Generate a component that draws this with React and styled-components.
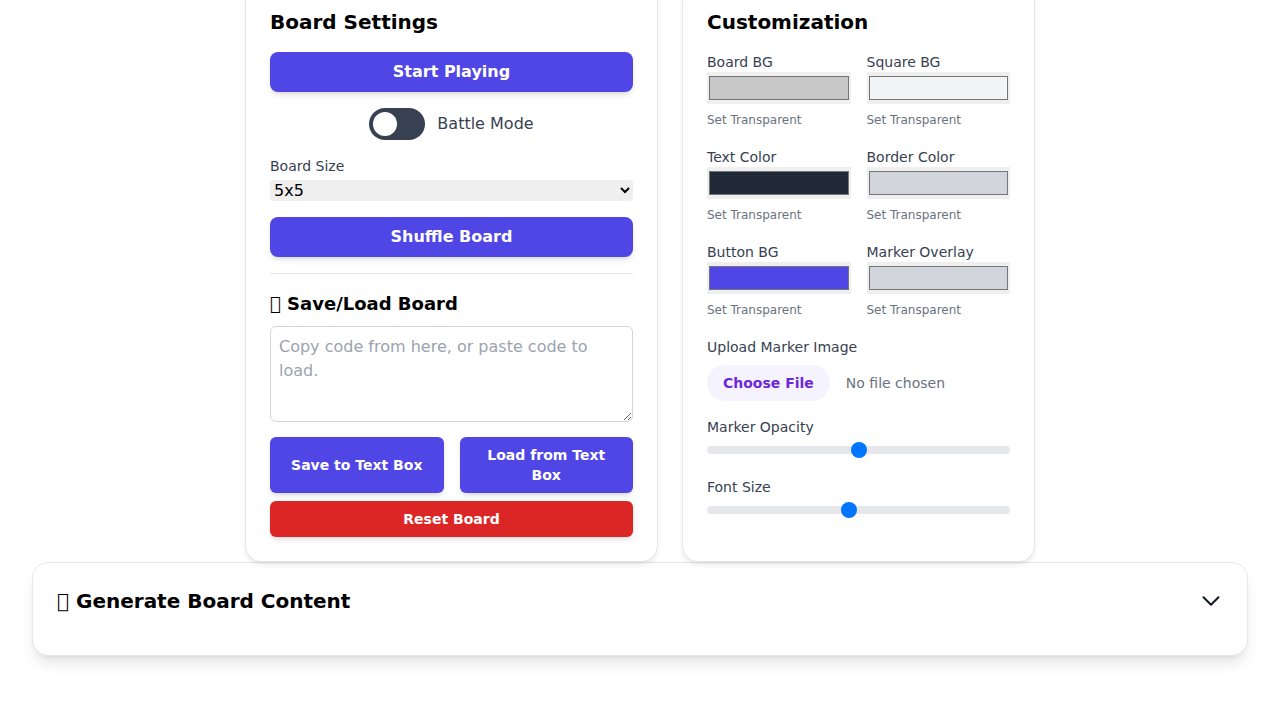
import React from "react"
import styled, { createGlobalStyle } from "styled-components"

const GlobalStyle = createGlobalStyle`
  * {
    box-sizing: border-box;
  }
  html,
  body {
    margin: 0;
    padding: 0;
    background: #ffffff;
    font-family: "DejaVu Sans", "Noto Sans", sans-serif;
    color: #111827;
    overflow: hidden;
  }
`

// the emoji in the original had no glyph, so it shows as an empty box
const MISSING = "\u{E000}"

const swatches = [
  { label: "Board BG", color: "#c8c8c8" },
  { label: "Square BG", color: "#f3f4f6" },
  { label: "Text Color", color: "#1f2937" },
  { label: "Border Color", color: "#d1d5db" },
  { label: "Button BG", color: "#4f46e5" },
  { label: "Marker Overlay", color: "#d1d5db" },
]

const ChevronDown = () => (
  <svg
    width="24"
    height="24"
    viewBox="0 0 24 24"
    fill="none"
    stroke="#111827"
    strokeWidth="2"
    strokeLinecap="round"
    strokeLinejoin="round"
  >
    <path d="M4.5 8.25 12 15.75 19.5 8.25" />
  </svg>
)

const App = () => {
  return (
    <Page>
      <GlobalStyle />
      <Columns>
        <Card>
          <Heading>Board Settings</Heading>
          <PrimaryButton>Start Playing</PrimaryButton>
          <ToggleRow>
            <Track>
              <Knob />
            </Track>
            <ToggleText>Battle Mode</ToggleText>
          </ToggleRow>
          <Field>
            <Label>Board Size</Label>
            <Select defaultValue="5x5">
              <option>3x3</option>
              <option>4x4</option>
              <option>5x5</option>
              <option>6x6</option>
            </Select>
          </Field>
          <PrimaryButton>Shuffle Board</PrimaryButton>
          <Divider />
          <SubHeading>{MISSING} Save/Load Board</SubHeading>
          <CodeBox placeholder="Copy code from here, or paste code to load." />
          <ButtonPair>
            <SmallButton>Save to Text Box</SmallButton>
            <SmallButton>Load from Text Box</SmallButton>
          </ButtonPair>
          <SmallButton $danger>Reset Board</SmallButton>
        </Card>

        <Card>
          <Heading>Customization</Heading>
          <ColorGrid>
            {swatches.map((s) => (
              <ColorField key={s.label}>
                <Label>{s.label}</Label>
                <ColorWell>
                  <Swatch $color={s.color} />
                </ColorWell>
                <TransparentLink>Set Transparent</TransparentLink>
              </ColorField>
            ))}
          </ColorGrid>
          <Field>
            <Label>Upload Marker Image</Label>
            <FileInput type="file" />
          </Field>
          <Field>
            <Label>Marker Opacity</Label>
            <Range type="range" min="0" max="1" step="0.05" defaultValue="0.5" />
          </Field>
          <Field>
            <Label>Font Size</Label>
            <Range type="range" min="10" max="40" defaultValue="24" />
          </Field>
        </Card>
      </Columns>

      <Collapsible>
        <CollapsibleHeader>
          <CollapsibleTitle>{MISSING} Generate Board Content</CollapsibleTitle>
          <ChevronDown />
        </CollapsibleHeader>
      </Collapsible>
    </Page>
  )
}

const Page = styled.div`
  margin-top: -17px;
  padding: 0 32px 40px 32px;
`

const Columns = styled.div`
  display: grid;
  grid-template-columns: 413px 353px;
  gap: 24px;
  justify-content: center;
  align-items: stretch;
`

const Card = styled.section`
  display: flex;
  flex-direction: column;
  background: #ffffff;
  border: 1px solid #e5e7eb;
  border-radius: 16px;
  padding: 24px;
  box-shadow: 0 4px 6px -1px rgba(0, 0, 0, 0.08), 0 2px 4px -2px rgba(0, 0, 0, 0.06);
`

const Heading = styled.h2`
  margin: 0 0 16px 0;
  font-size: 20px;
  line-height: 28px;
  font-weight: 700;
  color: #000;
`

const SubHeading = styled.h3`
  margin: 0 0 8px 0;
  font-size: 18px;
  line-height: 28px;
  font-weight: 700;
  color: #000;
`

const PrimaryButton = styled.button`
  height: 40px;
  width: 100%;
  border: none;
  border-radius: 8px;
  background: #4f46e5;
  color: #fff;
  font-family: inherit;
  font-size: 16px;
  line-height: 22px;
  padding: 0 0 1px 0;
  font-weight: 700;
  box-shadow: 0 4px 6px -1px rgba(0, 0, 0, 0.1), 0 2px 4px -2px rgba(0, 0, 0, 0.1);
  margin-bottom: 16px;
`

const ToggleRow = styled.div`
  display: flex;
  align-items: center;
  justify-content: center;
  gap: 12px;
  margin-bottom: 16px;
`

const Track = styled.div`
  width: 56px;
  height: 32px;
  border-radius: 16px;
  background: #374151;
  padding: 4px;
  display: flex;
  align-items: center;
`

const Knob = styled.div`
  width: 24px;
  height: 24px;
  border-radius: 50%;
  background: #fff;
`

const ToggleText = styled.span`
  font-size: 16px;
  line-height: 24px;
  padding-bottom: 1px;
  color: #374151;
`

const Field = styled.div`
  display: flex;
  flex-direction: column;
  margin-bottom: 16px;
`

const Label = styled.label`
  font-size: 14px;
  line-height: 20px;
  color: #374151;
`

const Select = styled.select`
  margin-top: 4px;
  width: 100%;
  height: 21px;
  border: none;
  border-radius: 4px;
  background: #efefef;
  font-family: inherit;
  font-size: 16px;
  color: #000;
  padding: 0;
`

const Divider = styled.hr`
  border: none;
  border-top: 1px solid #e5e7eb;
  margin: 0 0 16px 0;
`

const CodeBox = styled.textarea`
  height: 96px;
  width: 100%;
  border: 1px solid #d1d5db;
  border-radius: 6px;
  padding: 8px;
  font-family: inherit;
  font-size: 16px;
  line-height: 24px;
  resize: vertical;
  margin-bottom: 15px;
  &::placeholder {
    color: #9ca3af;
  }
`

const ButtonPair = styled.div`
  display: grid;
  grid-template-columns: 1fr 1fr;
  gap: 16px;
  margin-bottom: 8px;
`

const SmallButton = styled.button`
  min-height: ${(p) => (p.$danger ? "36px" : "56px")};
  width: 100%;
  border: none;
  border-radius: 6px;
  padding: 8px 16px;
  background: ${(p) => (p.$danger ? "#dc2626" : "#4f46e5")};
  color: #fff;
  font-family: inherit;
  font-size: 14px;
  line-height: 20px;
  font-weight: 700;
  box-shadow: 0 4px 6px -1px rgba(0, 0, 0, 0.1), 0 2px 4px -2px rgba(0, 0, 0, 0.1);
`

const ColorGrid = styled.div`
  display: grid;
  grid-template-columns: 1fr 1fr;
  column-gap: 16px;
  row-gap: 16px;
  margin-bottom: 16px;
`

const ColorField = styled.div`
  display: flex;
  flex-direction: column;
`

const ColorWell = styled.div`
  height: 32px;
  background: #efefef;
  padding: 4px 2px;
`

const Swatch = styled.div`
  height: 100%;
  border: 1px solid #767676;
  background: ${(p) => p.$color};
`

const TransparentLink = styled.span`
  margin-top: 5px;
  font-size: 12px;
  line-height: 22px;
  color: #6b7280;
  align-self: flex-start;
`

const FileInput = styled.input`
  margin-top: 8px;
  font-family: inherit;
  font-size: 14px;
  line-height: 20px;
  color: #6b7280;
  &::file-selector-button {
    margin-right: 16px;
    padding: 8px 16px;
    border: none;
    border-radius: 9999px;
    background: #f5f3ff;
    color: #6d28d9;
    font-family: inherit;
    font-size: 14px;
    line-height: 20px;
    font-weight: 700;
  }
`

const Range = styled.input`
  -webkit-appearance: none;
  appearance: none;
  width: 100%;
  height: 8px;
  margin: 9px 0 7px 0;
  border-radius: 4px;
  background: #e5e7eb;
  &::-webkit-slider-thumb {
    -webkit-appearance: none;
    width: 16px;
    height: 16px;
    border-radius: 50%;
    background: #0075ff;
    border: none;
  }
`

const Collapsible = styled.div`
  background: #fff;
  border: 1px solid #e5e7eb;
  border-radius: 16px;
  padding: 24px 24px 40px 24px;
  box-shadow: 0 10px 15px -3px rgba(0, 0, 0, 0.1), 0 4px 6px -4px rgba(0, 0, 0, 0.1);
`

const CollapsibleHeader = styled.div`
  display: flex;
  align-items: center;
  justify-content: space-between;
`

const CollapsibleTitle = styled.h2`
  margin: 0;
  font-size: 20px;
  line-height: 28px;
  font-weight: 700;
  color: #000;
`

export default App
